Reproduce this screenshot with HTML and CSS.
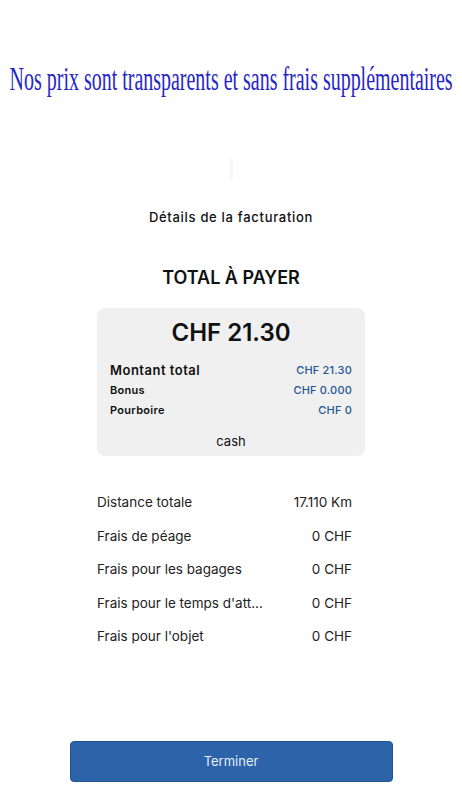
FILE: index.html
```html
<!DOCTYPE html>
<html lang="fr">

<head>
    <meta charset="UTF-8">
    <meta name="viewport" content="width=device-width, initial-scale=1.0">
    <title>Facturation</title>
    <link rel="stylesheet" href="styles.css">
</head>

<body>

    <div class="banner">
        <span class="banner-text">Nos prix sont transparents et sans frais supplémentaires</span>
    </div>

    <div class="mark"></div>

    <h2 class="subtitle">Détails de la facturation</h2>

    <div class="summary">
        <h1 class="total-title">TOTAL À PAYER</h1>

        <div class="card">
            <div class="amount">CHF 21.30</div>
            <div class="line main">
                <span>Montant total</span>
                <span class="value">CHF 21.30</span>
            </div>
            <div class="line">
                <span>Bonus</span>
                <span class="value">CHF 0.000</span>
            </div>
            <div class="line">
                <span>Pourboire</span>
                <span class="value">CHF 0</span>
            </div>
            <div class="method">cash</div>
        </div>

        <div class="details">
            <div class="row"><span>Distance totale</span><span>17.110 Km</span></div>
            <div class="row"><span>Frais de péage</span><span>0 CHF</span></div>
            <div class="row"><span>Frais pour les bagages</span><span>0 CHF</span></div>
            <div class="row"><span>Frais pour le temps d'att...</span><span>0 CHF</span></div>
            <div class="row"><span>Frais pour l'objet</span><span>0 CHF</span></div>
        </div>
    </div>

    <button class="finish">Terminer</button>

</body>

</html>
```

FILE: styles.css
```css
body {
    margin: 0;
    background-color: #fff;
    font-family: Inter, 'Noto Sans', sans-serif;
    color: #111;
}

.banner {
    height: 104px;
    display: flex;
    align-items: flex-end;
    justify-content: center;
    overflow: hidden;
}

.banner-text {
    display: inline-block;
    font-family: 'Liberation Serif', serif;
    font-size: 33px;
    line-height: 40px;
    color: #2626c8;
    white-space: nowrap;
    transform: scaleX(0.605);
    transform-origin: center;
    margin-bottom: 5px;
}

.mark {
    width: 3px;
    height: 20px;
    margin: 55px auto 0;
    background-color: #f6f6f6;
}

.subtitle {
    margin: 29px 0 0;
    text-align: center;
    font-size: 13px;
    font-weight: 500;
    line-height: 18px;
    letter-spacing: 0.7px;
}

.summary {
    width: 268px;
    margin: 0 auto;
}

.total-title {
    margin: 40px 0 0;
    text-align: center;
    font-size: 18px;
    font-weight: 600;
    line-height: 24px;
}

.card {
    margin-top: 18px;
    padding: 10px 13px 6px;
    background-color: #f0f0f0;
    border-radius: 8px;
}

.amount {
    text-align: center;
    font-size: 24px;
    font-weight: 600;
    line-height: 30px;
    margin-bottom: 12px;
}

.line {
    display: flex;
    justify-content: space-between;
    align-items: center;
    font-size: 11px;
    font-weight: 600;
    height: 20px;
    letter-spacing: 0.3px;
}

.line.main {
    font-size: 13px;
    letter-spacing: 0.5px;
}

.line .value {
    color: #1d5597;
    font-size: 11px;
    font-weight: 500;
    letter-spacing: 0.2px;
}

.method {
    text-align: center;
    font-size: 13px;
    line-height: 18px;
    margin-top: 12px;
}

.details {
    margin-top: 36px;
    padding-right: 13px;
}

.row {
    display: flex;
    justify-content: space-between;
    height: 33.5px;
    line-height: 20px;
    font-size: 13.5px;
    color: #222;
}

.finish {
    display: block;
    width: 323px;
    height: 41px;
    margin: 81px auto 0;
    background-color: #2d63a8;
    color: #e3eeff;
    font-family: Inter, 'Noto Sans', sans-serif;
    font-size: 13px;
    border: 1px solid #24548f;
    border-radius: 4px;
}
```
